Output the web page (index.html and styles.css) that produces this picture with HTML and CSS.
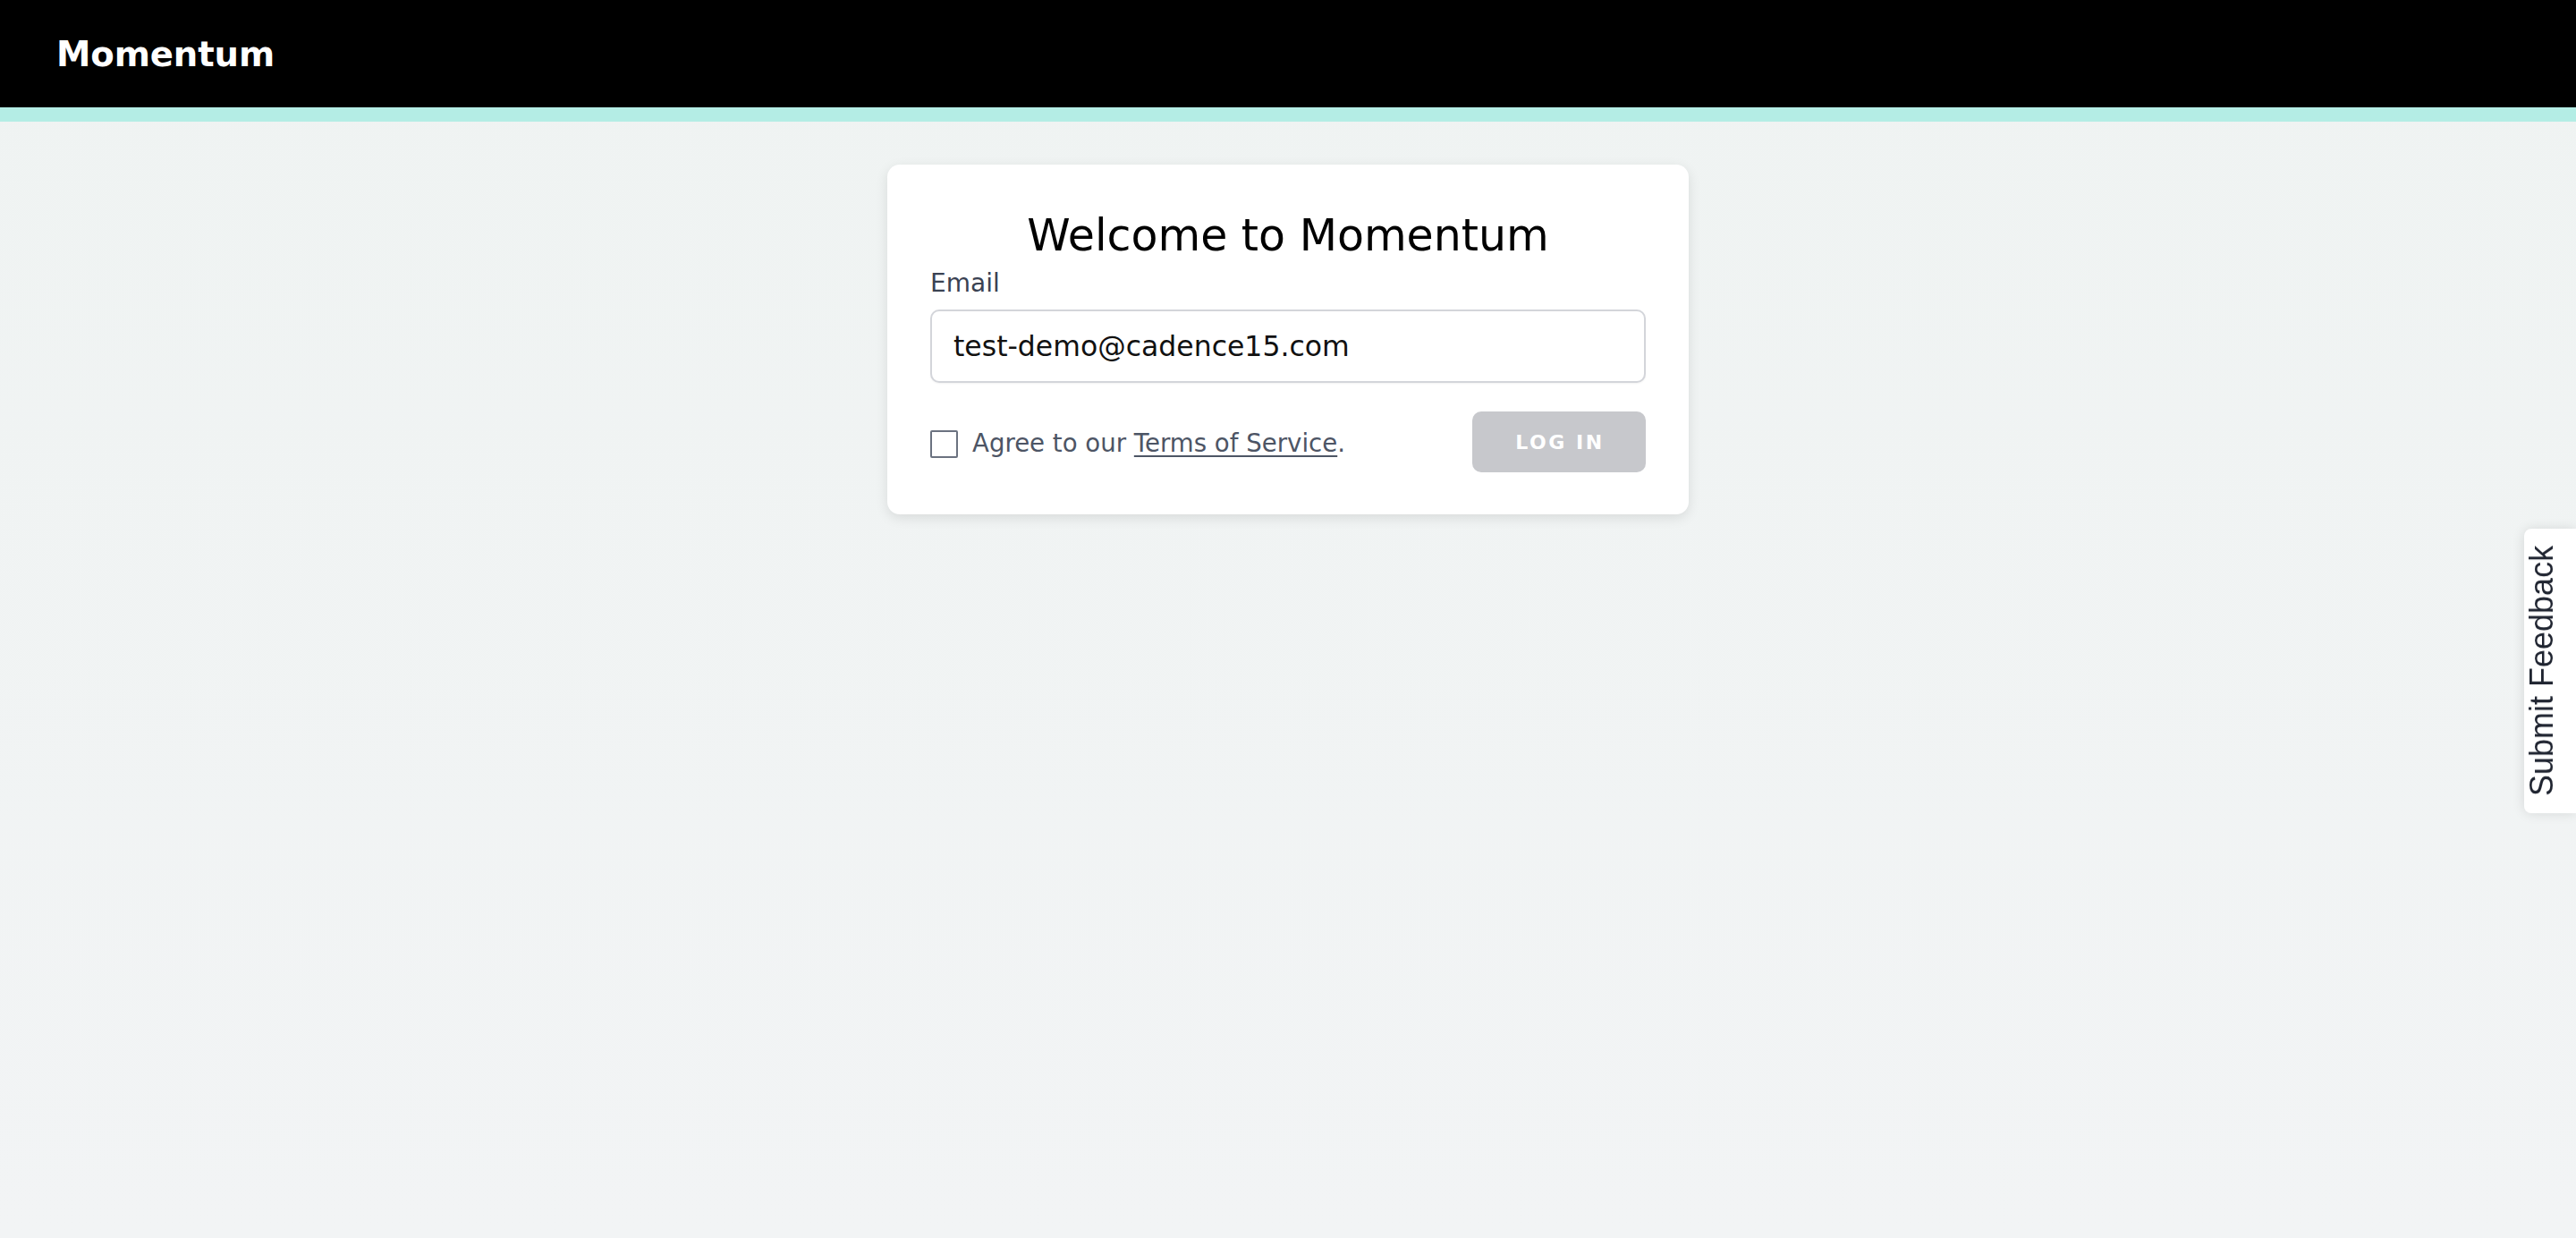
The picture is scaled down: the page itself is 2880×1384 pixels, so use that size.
FILE: index.html
```html
<!DOCTYPE html>
<html lang="en">
<head>
<meta charset="utf-8">
<title>Momentum</title>
<link rel="stylesheet" href="styles.css">
</head>
<body>
  <header class="topbar">
    <span class="brand">Momentum</span>
  </header>
  <div class="accent"></div>
  <main class="page">
    <section class="card">
      <h1 class="title">Welcome to Momentum</h1>
      <label class="label" for="email">Email</label>
      <input class="field" id="email" type="email" value="test-demo@cadence15.com">
      <div class="row">
        <label class="agree">
          <input class="check" type="checkbox">
          <span>Agree to our <a class="tos" href="#">Terms of Service</a>.</span>
        </label>
        <button class="login" type="button" disabled>LOG IN</button>
      </div>
    </section>
  </main>
  <button class="feedback" type="button">Submit Feedback</button>
</body>
</html>
```

FILE: styles.css
```css
html, body {
  margin: 0;
  padding: 0;
}

body {
  min-height: 100vh;
  background: linear-gradient(180deg, #eff3f2 0%, #f2f4f5 100%);
  font-family: "DejaVu Sans", "Liberation Sans", sans-serif;
}

.topbar {
  height: 120px;
  background: #000;
  display: flex;
  align-items: center;
  padding-left: 63px;
}

.brand {
  color: #fff;
  font-weight: 700;
  font-size: 38.6px;
  letter-spacing: -0.1px;
}

.accent {
  height: 16px;
  background: #b4ede5;
}

.page {
  display: flex;
  justify-content: center;
  padding-top: 48px;
}

.card {
  width: 896px;
  box-sizing: border-box;
  background: #fff;
  border-radius: 14px;
  padding: 51px 48px 47px;
  box-shadow: 0 4px 14px rgba(0, 0, 0, 0.10);
  display: flex;
  flex-direction: column;
}

.title {
  margin: 0;
  font-weight: 400;
  font-size: 49px;
  line-height: 58px;
  text-align: center;
  color: #000;
}

.label {
  margin-top: 8px;
  font-size: 28px;
  line-height: 32px;
  color: #3a4252;
}

.field {
  margin-top: 13px;
  height: 82px;
  width: 100%;
  box-sizing: border-box;
  border: 2px solid #d3d5da;
  border-radius: 10px;
  padding: 0 24px;
  font-family: "DejaVu Sans", "Liberation Sans", sans-serif;
  font-size: 31.5px;
  color: #111;
  background: #fff;
  box-shadow: 0 1px 2px rgba(0, 0, 0, 0.05);
  outline: none;
}

.row {
  margin-top: 32px;
  display: flex;
  align-items: center;
  justify-content: space-between;
}

.agree {
  display: flex;
  align-items: center;
  gap: 16px;
  font-size: 27.6px;
  color: #4d5565;
  margin-top: 2px;
}

.check {
  appearance: none;
  -webkit-appearance: none;
  margin: 2px 0 0;
  width: 31px;
  height: 31px;
  box-sizing: border-box;
  border: 2px solid #6b7280;
  border-radius: 2px;
  background: #fff;
}

.tos {
  color: #4d5565;
  text-decoration: underline;
  text-underline-offset: 4px;
  text-decoration-thickness: 2px;
}

.login {
  width: 194px;
  height: 68px;
  border: none;
  border-radius: 10px;
  background: #c7c8cc;
  color: #fff;
  font-family: "DejaVu Sans", "Liberation Sans", sans-serif;
  font-weight: 700;
  font-size: 22px;
  letter-spacing: 2.5px;
  padding: 0 0 0 2px;
}

.feedback {
  position: fixed;
  right: 0;
  top: 591px;
  writing-mode: vertical-rl;
  transform: rotate(180deg);
  font-family: "Liberation Sans", Arial, sans-serif;
  font-size: 36px;
  line-height: 40px;
  color: #1f2430;
  background: #fff;
  border: none;
  border-radius: 0 8px 8px 0;
  padding: 19px 0 19px 18px;
  box-shadow: 0 0 14px rgba(0, 0, 0, 0.12);
}
```
